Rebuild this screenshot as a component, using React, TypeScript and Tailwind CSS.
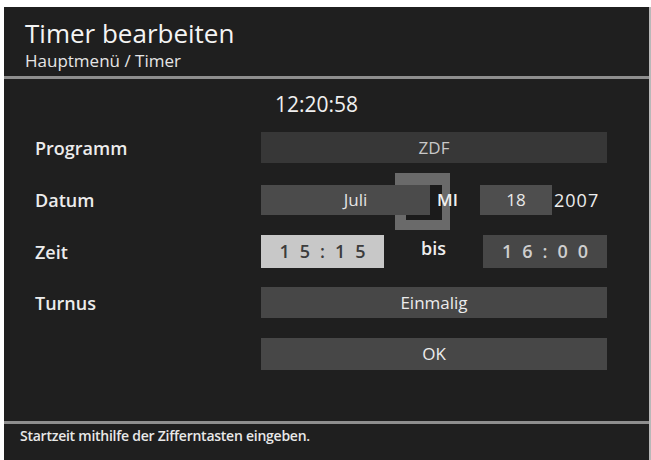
import React from "react";

function Row({ label, children, className = "" }: { label: string; children: React.ReactNode; className?: string }) {
  return (
    <div className={`grid grid-cols-[226px_346px] items-center ${className}`}>
      <div className="text-[18px] font-semibold text-[#ececec] leading-[22px]">{label}</div>
      {children}
    </div>
  );
}

export default function App() {
  return (
    <div className="w-[651px] h-[460px] bg-white pt-[7px] pl-[4px] font-['Open_Sans',sans-serif] overflow-hidden">
      <div className="h-[453px] w-[647px] bg-[#1f1f1f] border-r-[2px] border-[#b8b8b8] flex flex-col">
        {/* header */}
        <div className="h-[69px] pl-[21px] pt-[11px]">
          <div className="text-[26px] leading-[30px] text-[#f4f4f4] font-medium">Timer bearbeiten</div>
          <div className="text-[17px] leading-[20px] text-[#e6e6e6] mt-[3px] font-medium">Hauptmenü / Timer</div>
        </div>
        <div className="h-[3px] bg-[#8e8e8e]" />

        {/* main */}
        <div className="h-[342px] pl-[31px] pt-[13px] flex flex-col">
          <div className="pl-[240px] text-[21px] leading-[24px] text-[#f0f0f0] font-medium h-[24px]">12:20:58</div>

          <Row label="Programm" className="mt-[16px]">
            <div className="h-[31px] bg-[#373737] flex items-center justify-center text-[17px] font-medium text-[#c8c8c8]">ZDF</div>
          </Row>

          <Row label="Datum" className="mt-[22px]">
            <div className="relative h-[30px] flex items-center">
              <div className="absolute left-[134px] top-[-12px] w-[55px] h-[57px] bg-[#1b1b1b] border-l-[11px] border-t-[12px] border-r-[8px] border-b-[10px] border-[#6a6a6a]" />
              <div className="relative z-10 h-[30px] w-[169px] bg-[#4b4b4b] flex items-center justify-center pl-[20px] text-[17px] font-medium text-[#e4e4e4]">Juli</div>
              <div className="relative z-10 ml-[7px] w-[22px] text-[17px] font-semibold text-[#f0f0f0]">MI</div>
              <div className="relative z-10 ml-[21px] h-[30px] w-[72px] bg-[#4e4e4e] flex items-center justify-center text-[17px] font-medium text-[#e8e8e8]">18</div>
              <div className="relative z-10 ml-[2px] text-[18px] font-medium tracking-[1px] text-[#ededed]">2007</div>
            </div>
          </Row>

          <Row label="Zeit" className="mt-[20px]">
            <div className="flex items-center justify-between">
              <div className="h-[33px] w-[123px] bg-[#c8c8c8] flex items-center justify-center pl-[10px] text-[18px] font-semibold tracking-[10px] text-[#3c3c3c]">15:15</div>
              <div className="text-[18px] font-semibold text-[#eeeeee] pb-[6px]">bis</div>
              <div className="h-[33px] w-[124px] bg-[#474747] flex items-center justify-center pl-[10px] text-[18px] font-semibold tracking-[10px] text-[#cfcfcf]">16:00</div>
            </div>
          </Row>

          <Row label="Turnus" className="mt-[19px]">
            <div className="h-[31px] bg-[#474747] flex items-center justify-center text-[17px] font-medium text-[#ececec]">Einmalig</div>
          </Row>

          <Row label="" className="mt-[20px]">
            <div className="h-[32px] bg-[#474747] flex items-center justify-center text-[17px] font-medium text-[#ececec]">OK</div>
          </Row>
        </div>

        <div className="h-[3px] bg-[#8e8e8e]" />
        {/* footer */}
        <div className="h-[33px] pl-[16px] pt-[2px] text-[14px] leading-[20px] font-semibold tracking-[-0.25px] text-[#e8e8e8]">
          Startzeit mithilfe der Zifferntasten eingeben.
        </div>
      </div>
    </div>
  );
}
